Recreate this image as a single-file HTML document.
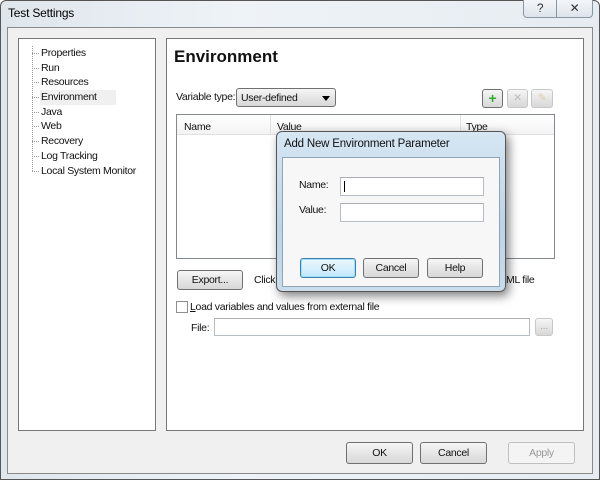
<!DOCTYPE html>
<html><head><meta charset="utf-8"><style>
*{box-sizing:border-box;margin:0;padding:0}
body{width:600px;height:480px;overflow:hidden;font-family:"Liberation Sans",sans-serif;font-size:10.5px;letter-spacing:-0.3px;color:#111;background:#fff;position:relative}
.a{position:absolute}
.win{left:0;top:0;width:600px;height:480px;border:1px solid #555;border-radius:6px 6px 0 0;background:linear-gradient(90deg,#dfe6ec,#eef3f7 40%,#e6ecf1);}
.client{left:7px;top:27px;width:586px;height:447px;background:#f0f0f0;border:1px solid #8a8a8a}
.panel{background:#fff;border:1px solid #777}
.btn{border:1px solid #707070;border-radius:3px;background:linear-gradient(#f6f6f6,#e6e6e6 50%,#d8d8d8);text-align:center;font-size:10.5px}
.inp{background:#fff;border:1px solid #b5bcc4;border-top-color:#abadb3}
.tree div{height:14.7px;line-height:14.7px;position:relative;padding-left:23px}
.tree div:before{content:"";position:absolute;left:14px;top:7px;width:7px;border-top:1px dotted #999}
</style></head><body>
<div class="a win"></div>
<div class="a" style="left:8px;top:6px;font-size:12px;letter-spacing:-0.2px;color:#000">Test Settings</div>
<div class="a" style="left:523px;top:0;width:34px;height:18px;border:1px solid #8a96a3;border-top:none;border-radius:0 0 0 4px;background:linear-gradient(#f3f6f9,#dde4ea);text-align:center;font-size:12px;line-height:16px;color:#333">?</div>
<div class="a" style="left:556px;top:0;width:37px;height:18px;border:1px solid #8a96a3;border-top:none;border-radius:0 0 4px 0;background:linear-gradient(#f3f6f9,#dde4ea);text-align:center;font-size:12px;line-height:16px;color:#333">✕</div>
<div class="a client"></div>
<div class="a panel" style="left:18px;top:38px;width:138px;height:393px"></div>
<div class="a tree" style="left:18px;top:46px;width:136px">
<div>Properties</div><div>Run</div><div>Resources</div><div style="background:linear-gradient(90deg,transparent 22px,#f0f0f0 22px,#f0f0f0 98px,transparent 98px)">Environment</div><div>Java</div><div>Web</div><div>Recovery</div><div>Log Tracking</div><div>Local System Monitor</div>
</div>
<div class="a" style="left:32px;top:46px;height:125px;border-left:1px dotted #999"></div>
<div class="a panel" style="left:166px;top:38px;width:418px;height:393px"></div>
<div class="a" style="left:174px;top:47px;font-size:17px;letter-spacing:0;font-weight:bold">Environment</div>
<div class="a" style="left:176px;top:91px">Variable type:</div>
<div class="a btn" style="left:236px;top:88px;width:100px;height:19px;text-align:left;padding:3px 0 0 4px;border-color:#707070">User-defined<span class="a" style="right:5px;top:7px;border:4px solid transparent;border-top:5px solid #000"></span></div>
<div class="a btn" style="left:482px;top:89px;width:21px;height:19px;color:#3a3;font-weight:bold;font-size:14px;line-height:16px">+</div>
<div class="a btn" style="left:507px;top:89px;width:21px;height:19px;border-color:#c8c8c8;color:#bbb;line-height:17px">✕</div>
<div class="a btn" style="left:531px;top:89px;width:22px;height:19px;border-color:#c8c8c8;color:#d8d0a0;line-height:17px">✎</div>
<div class="a" style="left:176px;top:114px;width:379px;height:145px;border:1px solid #828790;background:#fff"></div>
<div class="a" style="left:177px;top:115px;width:377px;height:20px;background:linear-gradient(#fff,#f3f3f3);border-bottom:1px solid #e0e0e0"></div>
<div class="a" style="left:270px;top:115px;height:20px;border-left:1px solid #e0e0e0"></div>
<div class="a" style="left:460px;top:115px;height:20px;border-left:1px solid #e0e0e0"></div>
<div class="a" style="left:184px;top:121px">Name</div>
<div class="a" style="left:277px;top:121px">Value</div>
<div class="a" style="left:466px;top:121px">Type</div>
<div class="a btn" style="left:177px;top:270px;width:66px;height:20px;line-height:18px">Export...</div>
<div class="a" style="left:254px;top:274px">Click</div>
<div class="a" style="left:506px;top:274px">ML file</div>
<div class="a inp" style="left:176px;top:301px;width:12px;height:12px;border-color:#8e8f8f"></div>
<div class="a" style="left:190px;top:301px"><u>L</u>oad variables and values from external file</div>
<div class="a" style="left:191px;top:322px">File:</div>
<div class="a inp" style="left:214px;top:318px;width:316px;height:18px"></div>
<div class="a btn" style="left:535px;top:318px;width:18px;height:18px;border-color:#c8c8c8;color:#aaa;line-height:14px">...</div>
<div class="a btn" style="left:346px;top:442px;width:67px;height:22px;line-height:20px">OK</div>
<div class="a btn" style="left:420px;top:442px;width:67px;height:22px;line-height:20px">Cancel</div>
<div class="a btn" style="left:508px;top:442px;width:67px;height:22px;line-height:20px;border-color:#c0c0c0;color:#999;background:#f4f4f4">Apply</div>
<div class="a" style="left:276px;top:131px;width:230px;height:161px;border:1px solid #555;border-radius:6px;background:linear-gradient(180deg,#d6e6f3,#bcd4e8 60%,#c8dcec);box-shadow:3px 4px 10px rgba(0,0,0,.5)"></div>
<div class="a" style="left:284px;top:138px;font-size:11.5px;letter-spacing:-0.2px;color:#111">Add New Environment Parameter</div>
<div class="a" style="left:282px;top:157px;width:218px;height:130px;background:#f7f7f7;border:1px solid #8ea4b8"></div>
<div class="a" style="left:299px;top:179px">Name:</div>
<div class="a inp" style="left:340px;top:177px;width:144px;height:19px"><span class="a" style="left:3px;top:3px;height:11px;border-left:1px solid #000"></span></div>
<div class="a" style="left:299px;top:204px">Value:</div>
<div class="a inp" style="left:340px;top:203px;width:144px;height:19px"></div>
<div class="a btn" style="left:300px;top:258px;width:56px;height:20px;line-height:18px;border-color:#3c7fb1;box-shadow:inset 0 0 0 1px #9fe0f8;background:linear-gradient(#eaf6fd,#d9f0fc 50%,#bee6fd)">OK</div>
<div class="a btn" style="left:363px;top:258px;width:56px;height:20px;line-height:18px">Cancel</div>
<div class="a btn" style="left:427px;top:258px;width:56px;height:20px;line-height:18px">Help</div>
</body></html>
